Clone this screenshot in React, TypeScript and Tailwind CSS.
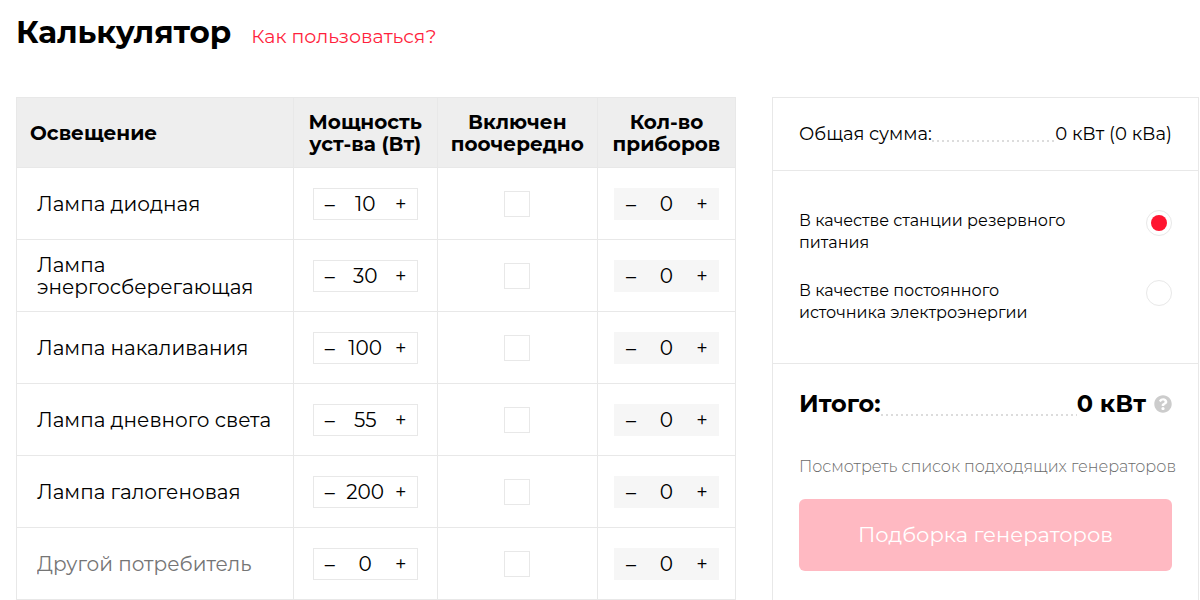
import { useState } from "react";
import { FaQuestionCircle } from "react-icons/fa";

type Consumer = { name: string; power: number };

const consumers: Consumer[] = [
  { name: "Лампа диодная", power: 10 },
  { name: "Лампа энергосберегающая", power: 30 },
  { name: "Лампа накаливания", power: 100 },
  { name: "Лампа дневного света", power: 55 },
  { name: "Лампа галогеновая", power: 200 },
  { name: "", power: 0 },
];

type StepperProps = { label: string; initial: number; filled?: boolean };

function Stepper({ label, initial, filled = false }: StepperProps) {
  const [value, setValue] = useState(initial);
  return (
    <div
      className={`mx-auto flex h-8 w-[105px] items-center border ${
        filled ? "border-[#f6f6f6] bg-[#f6f6f6]" : "border-[#e8e8e8] bg-white"
      }`}
    >
      <button
        type="button"
        aria-label={`${label}: уменьшить`}
        className="h-full w-8 shrink-0 text-xl leading-none"
        onClick={() => setValue(Math.max(0, value - 1))}
      >
        –
      </button>
      <input
        type="text"
        inputMode="numeric"
        aria-label={label}
        className="h-full w-full min-w-0 bg-transparent text-center text-xl leading-none outline-none"
        value={value}
        onChange={(e) => setValue(Number(e.target.value) || 0)}
      />
      <button
        type="button"
        aria-label={`${label}: увеличить`}
        className="h-full w-8 shrink-0 text-xl leading-none"
        onClick={() => setValue(value + 1)}
      >
        +
      </button>
    </div>
  );
}

function Leader() {
  return (
    <span className="mb-1 h-[2px] flex-1 self-end bg-[linear-gradient(to_right,#dcdcdc_50%,transparent_50%)] bg-[length:5px_2px]" />
  );
}

type ModeProps = { id: string; text: string; checked?: boolean };

function Mode({ id, text, checked = false }: ModeProps) {
  return (
    <div className="flex items-start justify-between">
      <label htmlFor={id} className="w-[270px] text-base leading-[22px]">
        {text}
      </label>
      <input
        id={id}
        type="radio"
        name="mode"
        defaultChecked={checked}
        className="size-[26px] shrink-0 appearance-none rounded-full border border-[#e8e8e8] bg-clip-content p-1 checked:bg-[#ff1530]"
      />
    </div>
  );
}

export default function App() {
  return (
    <main className="bg-white pt-3 pr-px pl-4 font-['Montserrat','Inter',sans-serif] text-black">
      <header className="flex items-baseline gap-5">
        <h1 className="text-[31px] leading-10 font-bold">Калькулятор</h1>
        <a href="#help" className="text-[19px] leading-6 text-[#ff1f3d]">
          Как пользоваться?
        </a>
      </header>

      <div className="mt-[45px] grid grid-cols-[minmax(0,720fr)_minmax(0,427fr)] items-start gap-9">
        <table className="w-full table-fixed border-collapse">
          <colgroup>
            <col className="w-[38.5%]" />
            <col className="w-[20%]" />
            <col className="w-[22.3%]" />
            <col className="w-[19.2%]" />
          </colgroup>
          <thead>
            <tr className="h-[70px] bg-[#eee] text-xl leading-[22px] font-bold">
              <th className="border border-[#e8e8e8] pl-[13px] text-left">Освещение</th>
              <th className="border border-[#e8e8e8]">
                Мощность
                <br />
                уст-ва (Вт)
              </th>
              <th className="border border-[#e8e8e8]">
                Включен
                <br />
                поочередно
              </th>
              <th className="border border-[#e8e8e8]">
                Кол-во
                <br />
                приборов
              </th>
            </tr>
          </thead>
          <tbody>
            {consumers.map(({ name, power }, i) => (
              <tr key={i} className="h-[72px]">
                <td className="border border-[#e8e8e8] pr-4 pl-5 text-xl leading-[22px]">
                  {name || (
                    <input
                      type="text"
                      aria-label="Другой потребитель"
                      placeholder="Другой потребитель"
                      className="w-full outline-none placeholder:text-[#757575]"
                    />
                  )}
                </td>
                <td className="border border-[#e8e8e8]">
                  <Stepper label="Мощность" initial={power} />
                </td>
                <td className="border border-[#e8e8e8]">
                  <input
                    type="checkbox"
                    aria-label="Включен поочередно"
                    className="mx-auto block size-[26px] appearance-none border border-[#e8e8e8] checked:bg-[#ff1530]"
                  />
                </td>
                <td className="border border-[#e8e8e8]">
                  <Stepper label="Количество" initial={0} filled />
                </td>
              </tr>
            ))}
          </tbody>
        </table>

        <aside className="border border-[#e8e8e8]">
          <div className="flex px-[26px] py-6 text-lg leading-6">
            <span>Общая сумма:</span>
            <Leader />
            <span>0 кВт (0 кВа)</span>
          </div>
          <div className="flex flex-col gap-[26px] border-y border-[#e8e8e8] px-[26px] py-[39px]">
            <Mode id="reserve" text="В качестве станции резервного питания" checked />
            <Mode id="permanent" text="В качестве постоянного источника электроэнергии" />
          </div>
          <div className="px-[26px] pt-6 pb-10">
            <div className="flex text-2xl leading-8 font-bold">
              <span>Итого:</span>
              <Leader />
              <span>0 кВт</span>
              <button type="button" aria-label="Подсказка" className="ml-2 text-lg text-[#ccc]">
                <FaQuestionCircle />
              </button>
            </div>
            <p className="mt-[35px] text-base leading-6 font-light whitespace-nowrap text-[#6b6b6b]">
              Посмотреть список подходящих генераторов
            </p>
            <button
              type="button"
              className="mt-5 h-[72px] w-full rounded-md bg-[#ffb9c2] text-[21px] text-white"
            >
              Подборка генераторов
            </button>
          </div>
        </aside>
      </div>
    </main>
  );
}
